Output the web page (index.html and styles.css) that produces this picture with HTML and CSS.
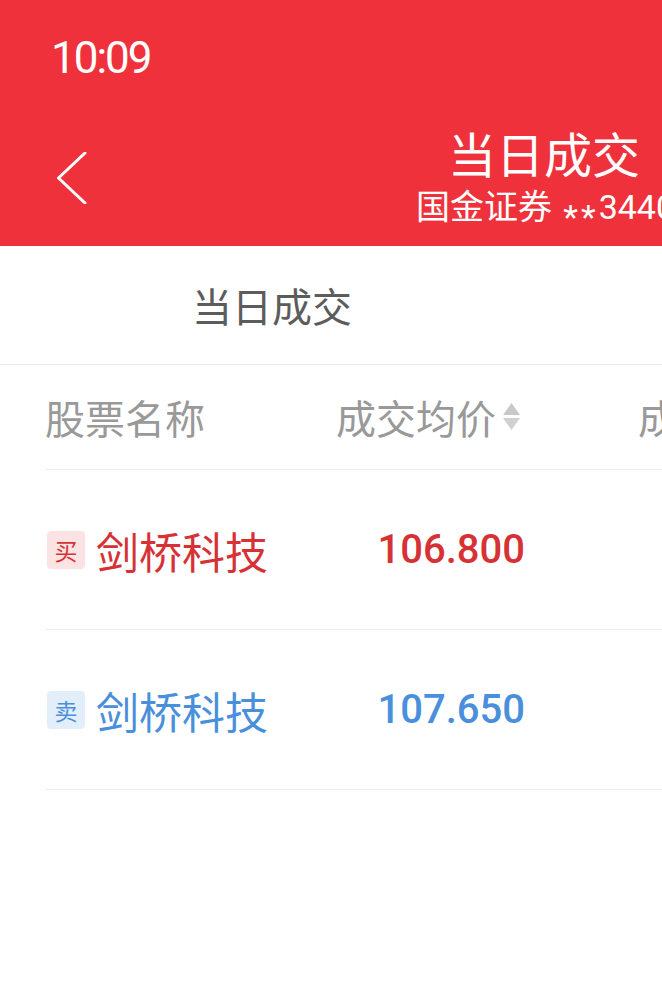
FILE: index.html
```html
<!DOCTYPE html>
<html lang="zh-CN">
<head>
    <meta charset="UTF-8">
    <meta name="viewport" content="width=device-width, initial-scale=1.0">
    <title>当日成交</title>
    <link rel="stylesheet" href="styles.css">
</head>
<body>
    <div class="top">
        <div class="status-bar">
            <span class="time">10:09</span>
        </div>
        <div class="nav-bar">
            <div class="back">
                <svg width="30" height="52" viewBox="0 0 30 52">
                    <polyline points="28,1 1.5,26 28,51" fill="none" stroke="#fff" stroke-width="3" stroke-linecap="round" stroke-linejoin="round"/>
                </svg>
            </div>
            <div class="title-block">
                <div class="title">当日成交</div>
                <div class="subtitle">国金证券 <span class="mask">**</span>3440</div>
            </div>
            <div class="nav-spacer"></div>
        </div>
    </div>

    <div class="tabs">
        <div class="tab">当日成交</div>
        <div class="tab"></div>
    </div>

    <div class="list">
        <div class="row head-row">
            <div class="cell col-name">股票名称</div>
            <div class="cell col-price">
                成交均价
                <svg class="sort" width="17" height="28" viewBox="0 0 17 28">
                    <polygon points="8.5,0 17,12 0,12" fill="#c8c8c8"/>
                    <polygon points="0,15 17,15 8.5,27" fill="#d0d0d0"/>
                </svg>
            </div>
            <div class="cell col-more">成交数量</div>
        </div>

        <div class="row trade buy">
            <div class="cell col-name">
                <span class="badge">买</span>
                <span class="name">剑桥科技</span>
            </div>
            <div class="cell col-price price">106.800</div>
            <div class="cell col-more"></div>
        </div>

        <div class="row trade sell">
            <div class="cell col-name">
                <span class="badge">卖</span>
                <span class="name">剑桥科技</span>
            </div>
            <div class="cell col-price price">107.650</div>
            <div class="cell col-more"></div>
        </div>
    </div>
</body>
</html>
```

FILE: styles.css
```css
body {
    margin: 0;
    width: 662px;
    overflow: hidden;
    background-color: #fff;
    font-family: "Noto Sans CJK SC", "Noto Sans", sans-serif;
}

.top {
    background-color: #ef313c;
    height: 246px;
    overflow: hidden;
    color: #fff;
}

.status-bar {
    height: 112px;
    box-sizing: border-box;
    padding: 36px 0 0 51px;
}

.time {
    font-family: "Roboto", sans-serif;
    font-size: 44px;
    line-height: 44px;
    letter-spacing: -2px;
    display: block;
}

.nav-bar {
    display: flex;
    width: 1088px;
    height: 134px;
}

.back {
    width: 130px;
    flex-shrink: 0;
    padding: 40px 0 0 57px;
    box-sizing: border-box;
}

.back svg {
    display: block;
}

.nav-spacer {
    width: 130px;
    flex-shrink: 0;
}

.title-block {
    flex: 1;
    display: flex;
    flex-direction: column;
    align-items: center;
    padding-top: 12px;
}

.title {
    font-size: 48px;
    line-height: 56px;
}

.subtitle {
    margin-top: 7px;
    margin-left: 3px;
    font-family: "Roboto", "Noto Sans CJK SC", sans-serif;
    font-size: 34px;
    line-height: 40px;
    white-space: nowrap;
}

.mask {
    vertical-align: -0.3em;
    letter-spacing: 3px;
    margin-left: 3px;
}

.tabs {
    display: flex;
    width: 1088px;
    height: 118px;
    border-bottom: 1px solid #ececec;
}

.tab {
    width: 544px;
    display: flex;
    align-items: center;
    justify-content: center;
    font-size: 40px;
    color: #5c5c5c;
}

.list {
    padding-left: 45px;
}

.row {
    display: flex;
    align-items: center;
    border-bottom: 1px solid #ececec;
    white-space: nowrap;
}

.head-row {
    height: 104px;
    font-size: 40px;
    color: #999;
}

.trade {
    height: 159px;
}

.cell {
    flex-shrink: 0;
}

.col-name {
    width: 291px;
    display: flex;
    align-items: center;
}

.col-price {
    width: 189px;
    box-sizing: border-box;
    display: flex;
    align-items: center;
    justify-content: flex-end;
}

.head-row .col-price {
    padding-right: 5px;
}

.col-more {
    margin-left: 113px;
}

.sort {
    margin-left: 7px;
    display: block;
}

.badge {
    width: 38px;
    height: 38px;
    margin-left: 2px;
    border-radius: 4px;
    display: flex;
    align-items: center;
    justify-content: center;
    font-size: 23px;
}

.name {
    margin-left: 11px;
    font-size: 43px;
}

.price {
    font-family: "Roboto", sans-serif;
    font-size: 40px;
    font-weight: 500;
}

.buy {
    color: #d63236;
}

.buy .badge {
    background-color: #fce3e3;
}

.sell {
    color: #4a8fdc;
}

.sell .badge {
    background-color: #e3eefb;
}
```
